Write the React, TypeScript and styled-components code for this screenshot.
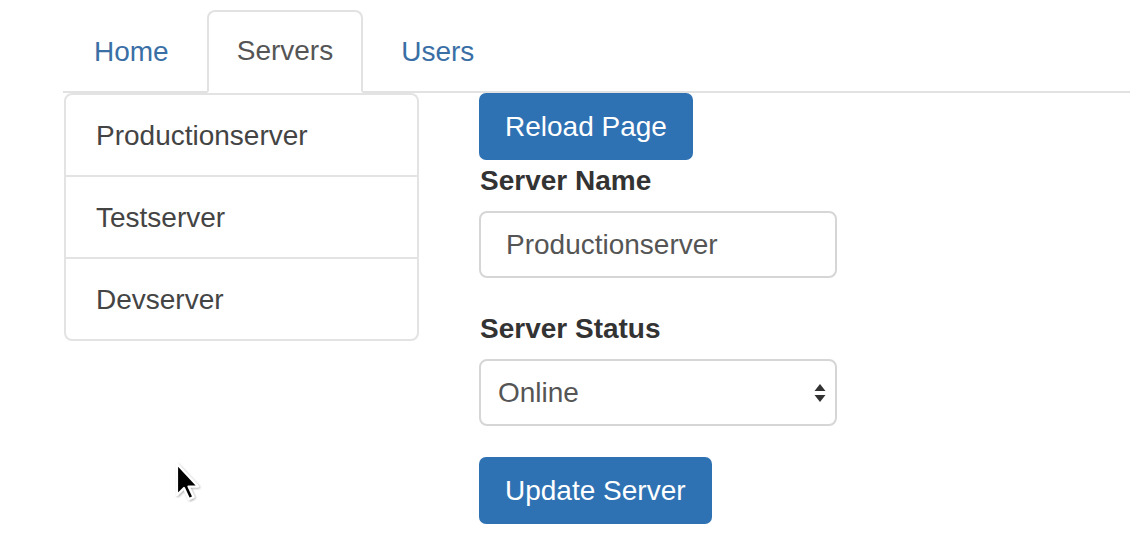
import React from "react";
import styled, { createGlobalStyle } from "styled-components";

const Global = createGlobalStyle`
  html, body { margin: 0; padding: 0; background: #fff; }
  body {
    font-family: "Liberation Sans", Arial, Helvetica, sans-serif;
    font-size: 28px;
    color: #333;
    width: 1130px;
    height: 559px;
    overflow: hidden;
  }
`;

const Page = styled.div`
  position: relative;
  padding: 10px 0 0 63px;
  width: 1130px;
  height: 559px;
  box-sizing: border-box;
`;

const Tabs = styled.ul`
  display: flex;
  list-style: none;
  margin: 0;
  padding: 0 0 0 1px;
  border-bottom: 2px solid #e2e2e2;
  height: 83px;
  box-sizing: border-box;
`;

const Tab = styled.li<{ $active?: boolean }>`
  margin-right: 8px;
  margin-bottom: ${(p) => (p.$active ? "-2px" : "0")};
  a {
    display: flex;
    align-items: center;
    height: ${(p) => (p.$active ? "83px" : "81px")};
    box-sizing: border-box;
    padding: 0 28px ${(p) => (p.$active ? "2px" : "0")};
    border: 2px solid ${(p) => (p.$active ? "#e2e2e2" : "transparent")};
    border-bottom: ${(p) => (p.$active ? "2px solid #fff" : "none")};
    border-radius: 8px 8px 0 0;
    background: ${(p) => (p.$active ? "#fff" : "transparent")};
    color: ${(p) => (p.$active ? "#555" : "#3a6fa6")};
    text-decoration: none;
    font-size: 28px;
  }
`;

const Row = styled.div`
  display: flex;
  gap: 61px;
`;

const ListGroup = styled.div`
  width: 355px;
  margin-left: 1px;
  border: 2px solid #e3e3e3;
  border-radius: 8px;
  box-sizing: border-box;
  display: flex;
  flex-direction: column;
  align-self: flex-start;
`;

const ListItem = styled.div`
  height: 80px;
  display: flex;
  align-items: center;
  padding: 2px 0 0 30px;
  box-sizing: border-box;
  color: #444;
  & + & {
    border-top: 2px solid #e3e3e3;
    height: 82px;
  }
`;

const Form = styled.div`
  display: flex;
  flex-direction: column;
  align-items: flex-start;
  width: 358px;
  margin-left: -1px;
`;

const Button = styled.button`
  height: 67px;
  padding: 0 26px;
  border: none;
  border-radius: 7px;
  background: #2f72b4;
  color: #fff;
  font-family: inherit;
  font-size: 28px;
  line-height: 1;
`;

const Label = styled.label<{ $top: number }>`
  display: block;
  font-weight: bold;
  font-size: 28px;
  color: #333;
  line-height: 42px;
  margin-top: ${(p) => p.$top}px;
  margin-bottom: 9px;
  padding-left: 1px;
`;

const Input = styled.div`
  width: 358px;
  height: 67px;
  border: 2px solid #d6d6d6;
  border-radius: 8px;
  box-sizing: border-box;
  display: flex;
  align-items: center;
  padding: 0 0 0 25px;
  color: #555;
`;

const Select = styled(Input)`
  padding-left: 17px;
  justify-content: space-between;
  padding-right: 9px;
  margin-bottom: 31px;
`;

const Cursor = styled.svg`
  position: absolute;
  left: 173px;
  top: 461px;
`;

export default function App() {
  return (
    <Page>
      <Global />
      <Tabs>
        <Tab><a>Home</a></Tab>
        <Tab $active><a>Servers</a></Tab>
        <Tab><a>Users</a></Tab>
      </Tabs>
      <Row>
        <ListGroup>
          <ListItem>Productionserver</ListItem>
          <ListItem>Testserver</ListItem>
          <ListItem>Devserver</ListItem>
        </ListGroup>
        <Form>
          <Button>Reload Page</Button>
          <Label $top={0}>Server Name</Label>
          <Input>Productionserver</Input>
          <Label $top={30}>Server Status</Label>
          <Select>
            <span>Online</span>
            <svg width="12" height="20" viewBox="0 0 12 20">
              <path d="M6 1 L11.5 8 L0.5 8 Z" fill="#333" />
              <path d="M6 19 L11.5 12 L0.5 12 Z" fill="#333" />
            </svg>
          </Select>
          <Button>Update Server</Button>
        </Form>
      </Row>
      <Cursor width="30" height="44" viewBox="0 0 30 44">
        <defs>
          <filter id="cs" x="-30%" y="-30%" width="160%" height="160%">
            <feGaussianBlur in="SourceAlpha" stdDeviation="1.2" />
            <feOffset dx="0.5" dy="1" result="b" />
            <feComponentTransfer><feFuncA type="linear" slope="0.35" /></feComponentTransfer>
            <feMerge>
              <feMergeNode />
              <feMergeNode in="SourceGraphic" />
            </feMerge>
          </filter>
        </defs>
        <path
          d="M4 3 L4 34 L11 27 L16 38 L20.5 36 L15.5 25.5 L25 25.5 Z"
          fill="#000"
          stroke="#fff"
          strokeWidth="2.2"
          strokeLinejoin="round"
          filter="url(#cs)"
        />
      </Cursor>
    </Page>
  );
}
